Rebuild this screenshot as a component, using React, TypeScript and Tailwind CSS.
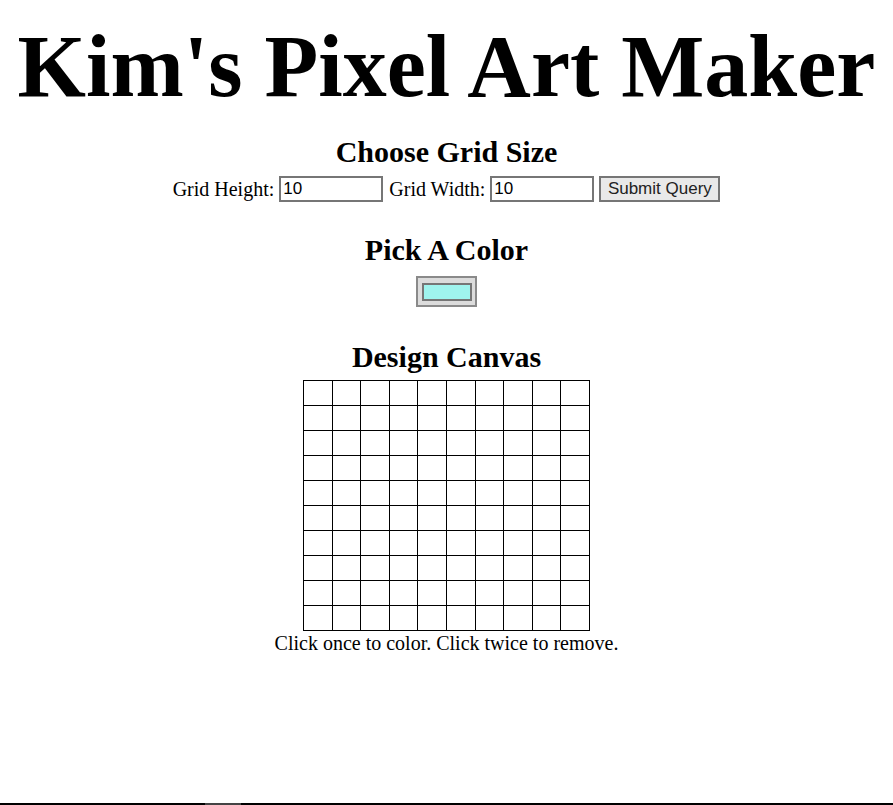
import React from "react";

export default function App() {
  const rows = Array.from({ length: 10 });
  const cols = Array.from({ length: 10 });
  const sans = { fontFamily: '"Liberation Sans", Arial, sans-serif' };
  return (
    <div className="min-h-[805px] flex flex-col bg-white text-black" style={{ fontFamily: '"Liberation Serif", "Times New Roman", serif' }}>
      <div className="flex-1 flex flex-col items-center">
        <h1 className="text-[88px] font-bold leading-none mt-[23px]">Kim's Pixel Art Maker</h1>
        <h2 className="text-[30px] font-bold leading-none mt-[26px]">Choose Grid Size</h2>
        <div className="flex items-center mt-[7px] text-[20px]">
          <span>Grid Height:</span>
          <div className="ml-[5px] w-[104px] h-[26px] border-2 border-[#767676] bg-white flex items-center px-[2px] text-[17px]" style={sans}>10</div>
          <span className="ml-[6px]">Grid Width:</span>
          <div className="ml-[5px] w-[104px] h-[26px] border-2 border-[#767676] bg-white flex items-center px-[2px] text-[17px]" style={sans}>10</div>
          <div className="ml-[5px] w-[121px] h-[26px] border-2 border-[#767676] bg-[#e9e9e9] flex items-center justify-center text-[17px] text-[#222]" style={sans}>Submit Query</div>
        </div>
        <h2 className="text-[30px] font-bold leading-none mt-[31px]">Pick A Color</h2>
        <div className="mt-[11px] w-[61px] h-[31px] border-2 border-[#8a8a8a] bg-[#dcdcdc] flex items-center justify-center">
          <div className="w-[50px] h-[18px] border-2 border-[#767676] bg-[#9ff4ee]" />
        </div>
        <h2 className="text-[30px] font-bold leading-none mt-[35px]">Design Canvas</h2>
        <table className="border-collapse mt-[8px]">
          <tbody>
            {rows.map((_, r) => (
              <tr key={r}>
                {cols.map((_, c) => (
                  <td key={c} className="border border-black w-[28.6px] h-[25px] p-0" />
                ))}
              </tr>
            ))}
          </tbody>
        </table>
        <p className="text-[20px] leading-none mt-[2px]">Click once to color. Click twice to remove.</p>
      </div>
      <div className="h-[2px] bg-black flex">
        <div className="ml-[205px] w-[36px] bg-[#444]" />
      </div>
    </div>
  );
}
